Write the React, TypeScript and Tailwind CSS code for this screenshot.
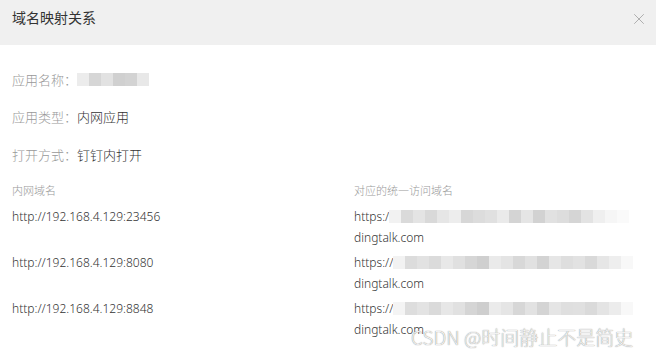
import { X } from 'lucide-react'

const FONT = "font-['Noto_Sans','Noto_Sans_CJK_SC',sans-serif]"

// mosaic blur cells, one grey per 12px block
const NAME_BLUR = ['#ececec', '#d6d6d6', '#e2e2e2', '#d0d0d0', '#d3d3d3', '#e8e8e8']
const URL_BLURS = [
  ['#f2f2f2', '#dadada', '#e4e4e4', '#d9d9d9', '#e6e6e6', '#ededed', '#d7d7d7', '#dcdcdc', '#e0e0e0', '#eaeaea', '#d4d4d4', '#e5e5e5', '#d2d2d2', '#e1e1e1', '#dddddd', '#d5d5d5', '#e3e3e3', '#efefef', '#f6f6f6', '#fafafa'],
  ['#f2f2f2', '#dcdcdc', '#e2e2e2', '#dbdbdb', '#e8e8e8', '#e0e0e0', '#d6d6d6', '#cfcfcf', '#eaeaea', '#e4e4e4', '#d8d8d8', '#e1e1e1', '#d3d3d3', '#e6e6e6', '#dedede', '#e2e2e2', '#d9d9d9', '#e6e6e6', '#eeeeee', '#f8f8f8'],
  ['#f4f4f4', '#dddddd', '#e3e3e3', '#dadada', '#e7e7e7', '#e1e1e1', '#d5d5d5', '#cecece', '#ebebeb', '#e5e5e5', '#d7d7d7', '#e2e2e2', '#d4d4d4', '#e5e5e5', '#dfdfdf', '#e0e0e0', '#dadada', '#e4e4e4', '#ececec', '#f8f8f8'],
]

const ROWS = [
  { inner: 'http://192.168.4.129:23456', prefix: 'https:/' },
  { inner: 'http://192.168.4.129:8080', prefix: 'https://' },
  { inner: 'http://192.168.4.129:8848', prefix: 'https://' },
]

function Blur({ cells }: { cells: string[] }) {
  return (
    <span className="inline-flex h-[13px]">
      {cells.map((c, i) => (
        <span key={i} className="w-[12px] h-full" style={{ background: c }} />
      ))}
    </span>
  )
}

export default function App() {
  return (
    <div className={`relative w-[656px] h-[358px] bg-white overflow-hidden ${FONT}`}>
      {/* Header */}
      <div className="h-[45px] bg-[#f0f0f0] flex items-start justify-between pl-[12px] pr-[8px] pt-[8px]">
        <span className="text-[14px] text-[#333] leading-[20px]">域名映射关系</span>
        <X size={18} strokeWidth={1} className="text-[#999] mt-[2px]" />
      </div>

      <div className="px-[12px] text-[13px] leading-[16px] font-light">
        <div className="flex items-center h-[13px] mt-[28px]">
          <span className="text-[#999]">应用名称：</span>
          <Blur cells={NAME_BLUR} />
        </div>
        <div className="flex items-center mt-[23px]">
          <span className="text-[#999]">应用类型：</span>
          <span className="text-[#333]">内网应用</span>
        </div>
        <div className="flex items-center mt-[22px]">
          <span className="text-[#999]">打开方式：</span>
          <span className="text-[#333]">钉钉内打开</span>
        </div>

        <div className="grid grid-cols-[342px_1fr] mt-[21px] text-[11px] text-[#999] leading-[14px]">
          <span>内网域名</span>
          <span>对应的统一访问域名</span>
        </div>

        <div className="mt-[8px] flex flex-col gap-[4px]">
          {ROWS.map((r, i) => (
            <div key={i} className="grid grid-cols-[342px_1fr] text-[12px] text-[#333] leading-[21px]">
              <span>{r.inner}</span>
              <div className="flex flex-col">
                <span className="flex items-center">
                  {r.prefix}
                  <Blur cells={URL_BLURS[i]} />
                </span>
                <span>dingtalk.com</span>
              </div>
            </div>
          ))}
        </div>
      </div>

      {/* watermark */}
      <span className="absolute left-[411px] top-[325px] text-[19px] text-[#f2f2f2] leading-[24px] font-light [text-shadow:0_0_1px_#6a6a6a] font-['Noto_Sans_CJK_SC',sans-serif]">
        CSDN @时间静止不是简史
      </span>
    </div>
  )
}
